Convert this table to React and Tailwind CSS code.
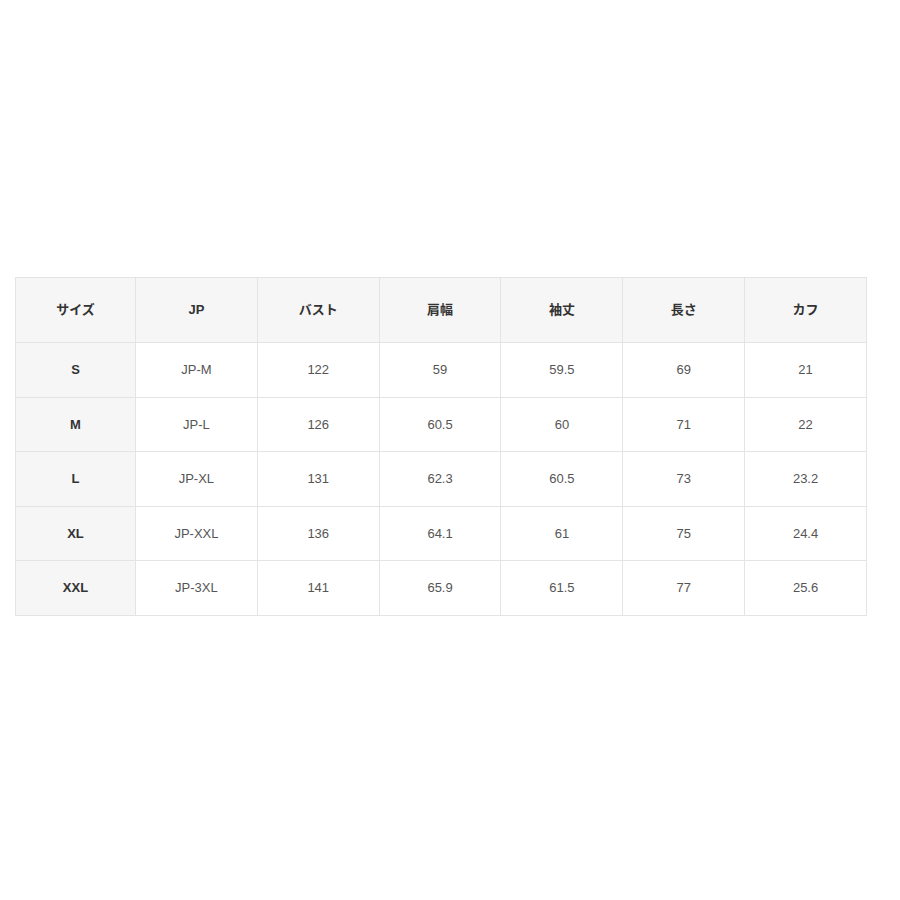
import React from "react";

const headers = ["サイズ", "JP", "バスト", "肩幅", "袖丈", "長さ", "カフ"];
const rows = [
  ["S", "JP-M", "122", "59", "59.5", "69", "21"],
  ["M", "JP-L", "126", "60.5", "60", "71", "22"],
  ["L", "JP-XL", "131", "62.3", "60.5", "73", "23.2"],
  ["XL", "JP-XXL", "136", "64.1", "61", "75", "24.4"],
  ["XXL", "JP-3XL", "141", "65.9", "61.5", "77", "25.6"],
];

export default function App() {
  return (
    <div
      className="w-[900px] h-[900px] bg-white pt-[277px] pl-[15px]"
      style={{ fontFamily: '"Liberation Sans", "Noto Sans CJK JP", sans-serif' }}
    >
      <table className="border-collapse w-[852px] table-fixed text-[13px]">
        <thead>
          <tr className="h-[65px] bg-[#f6f6f6]">
            {headers.map((h, i) => (
              <th
                key={i}
                className={`border border-[#e4e4e4] font-bold text-[#333] text-center ${i === 0 ? "w-[120px]" : ""}`}
              >
                {h}
              </th>
            ))}
          </tr>
        </thead>
        <tbody>
          {rows.map((r, ri) => (
            <tr key={ri} className="h-[54.6px]">
              {r.map((c, ci) => (
                <td
                  key={ci}
                  className={
                    ci === 0
                      ? "border border-[#e4e4e4] bg-[#f6f6f6] font-bold text-[#333] text-center"
                      : "border border-[#e4e4e4] bg-white text-[#555] text-center"
                  }
                >
                  {c}
                </td>
              ))}
            </tr>
          ))}
        </tbody>
      </table>
    </div>
  );
}
